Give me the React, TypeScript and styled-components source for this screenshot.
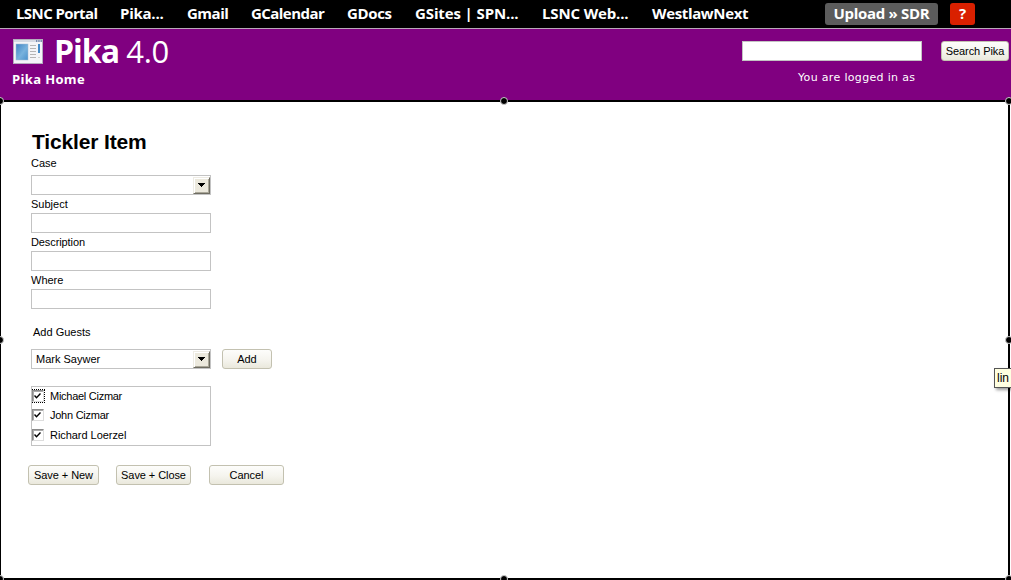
import React from "react";
import styled, { createGlobalStyle } from "styled-components";

const Global = createGlobalStyle`
  * { box-sizing: border-box; }
  body { margin: 0; background: #fff; overflow: hidden; }
`;
const Page = styled.div`
  width: 1011px; height: 580px; overflow: hidden;
  display: flex; flex-direction: column;
  font: 11px/13px "Liberation Sans", Arial, sans-serif; color: #000;
`;
const NavBar = styled.nav`
  height: 29px; flex: none; background: #000; border-bottom: 1px solid #b9a9b9;
  display: flex; align-items: flex-start; padding-left: 16px;
  font: 700 15px/26px "Open Sans", "Noto Sans", sans-serif; color: #fff;
`;
const NavLink = styled.a<{ $w: number; $ls?: number }>`
  width: ${p => p.$w}px; flex: none; white-space: nowrap; letter-spacing: ${p => p.$ls ?? 0}px;
`;
const Pill = styled.a<{ $w: number; $bg: string; $gap: number; $ls?: number }>`
  width: ${p => p.$w}px; height: 22px; margin: 3px 0 0 ${p => p.$gap}px; flex: none;
  background: ${p => p.$bg}; border-radius: 3px; line-height: 20px; text-align: center; white-space: nowrap;
  letter-spacing: ${p => p.$ls ?? 0}px;
`;
const Header = styled.header`
  height: 71px; flex: none; background: #800080; color: #fff;
  display: flex; justify-content: space-between; padding: 0 2px 0 12px;
`;
const Brand = styled.div`display: flex; flex-direction: column;`;
const Logo = styled.div`
  height: 42px; display: flex; align-items: flex-start;
  svg { margin: 10px 11px 0 1px; flex: none; }
`;
const Title = styled.h1`
  margin: 0; white-space: nowrap; font: 700 32px/44px "Open Sans", sans-serif; letter-spacing: -1px;
  span { font-weight: 400; font-size: 31px; letter-spacing: -0.3px; }
`;
const Home = styled.div`font: 700 13px/16px "Open Sans", sans-serif; letter-spacing: 0.35px;`;
const Search = styled.div`display: flex; gap: 19px; padding-top: 12px;`;
const SearchColumn = styled.div`width: 180px;`;
const LoggedIn = styled.div`
  margin: 9px 0 0 56px; font: 11px/16px "DejaVu Sans", Verdana, sans-serif; white-space: nowrap; letter-spacing: 0.33px;
`;
const Field = styled.div<{ $mb?: number }>`
  width: 180px; height: 20px; flex: none; background: #fff; border: 1px solid #c3c3c3;
  margin-bottom: ${p => p.$mb ?? 0}px; display: flex; align-items: center; justify-content: space-between;
  padding-left: 4px;
`;
const Button = styled.button<{ $w: number }>`
  width: ${p => p.$w}px; height: 20px; flex: none; padding: 0; border: 1px solid #c3c1b0; border-radius: 3px;
  background: linear-gradient(#fdfdfb, #f5f4ee 55%, #eae8dc);
  font: inherit; letter-spacing: -0.08px; color: #000; white-space: nowrap;
`;
const Content = styled.main`
  position: relative; width: 1010px; height: 480px; flex: none; background: #fff;
  border: 2px solid #000; border-left-width: 1px;
  display: flex; flex-direction: column; padding: 28px 0 0 30px;
`;
const Heading = styled.h2`margin: 0 0 3px 1px; font-size: 21px; line-height: 24px; letter-spacing: -0.15px;`;
const Label = styled.label<{ $mb: number; $ml?: number; $ls?: number }>`
  height: 13px; margin: 0 0 ${p => p.$mb}px ${p => p.$ml ?? 0}px; letter-spacing: ${p => p.$ls ?? 0}px;
`;
const Arrow = styled.span`
  width: 17px; height: 17px; background: #ece9dd; border: 1px solid;
  border-color: #eeece4 #6f6d62 #6f6d62 #eeece4; box-shadow: inset 1px 1px #fff, inset -1px -1px #aaa799;
  display: flex; align-items: flex-start; justify-content: center; padding-top: 5px;
`;
const Row = styled.div<{ $gap: number; $mb?: number }>`
  display: flex; column-gap: ${p => p.$gap}px; margin-bottom: ${p => p.$mb ?? 0}px;
`;
const GuestList = styled.div`
  width: 180px; height: 60px; border: 1px solid #c3c3c3; margin-bottom: 19px;
`;
const Guest = styled.div<{ $h: number }>`
  height: ${p => p.$h}px; display: flex; align-items: center; gap: 5px;
`;
const GuestName = styled.span<{ $ls: number }>`letter-spacing: ${p => p.$ls}px;`;
const FocusRing = styled.span<{ $on: boolean }>`
  width: 13px; height: 14px; border: 1px dotted ${p => (p.$on ? "#000" : "transparent")};
  display: flex; flex: none;
`;
const Check = styled.span`
  width: 12px; height: 12px; flex: none; margin-left: -1px;
  border: 1px solid; border-color: #8a8a8a #ddd #ddd #8a8a8a; box-shadow: inset 1px 1px #aaa;
  svg { display: block; margin: 1px 0 0 1px; }
`;
const Actions = styled.div`
  display: flex; margin-left: -3px;
  button + button { margin-left: 17px; }
  button + button + button { margin-left: 18px; }
`;
const Handle = styled.i<{ $x: number; $y: number }>`
  position: absolute; left: ${p => p.$x}px; top: ${p => p.$y}px; width: 8px; height: 8px;
  border: 1px solid #ccc; background: #000; border-radius: 50%;
`;
const Tooltip = styled.div`
  position: absolute; left: 993px; top: 266px; width: 25px; height: 20px; border: 1px solid #555;
  background: #ffffe1; font: 12px/18px "Liberation Sans", sans-serif; padding-left: 2px; box-shadow: 2px 2px 3px #0006;
`;

const ArrowButton = () => (
  <Arrow><svg width="7" height="4" viewBox="0 0 7 4" shapeRendering="crispEdges"><path d="M0 0H7V1H6V2H5V3H4V4H3V3H2V2H1V1H0Z" /></svg></Arrow>
);
const WindowIcon = () => (
  <svg width="30" height="25" viewBox="0 0 30 25">
    <defs>
      <linearGradient id="pane" x1="0" y1="0" x2="1" y2="1">
        <stop stopColor="#3f83c4" /><stop offset=".55" stopColor="#78b2dd" /><stop offset="1" stopColor="#4b91cc" />
      </linearGradient>
    </defs>
    <rect x=".5" y=".5" width="29" height="24" fill="#f4f5f8" stroke="#b4adbd" />
    <path d="M1 1H29V3H1Z" fill="#d6dae3" />
    <path d="M23 2h1.3m1 0h1.3m1 0h1.3" stroke="#59709c" strokeWidth="1.3" />
    <rect x="3" y="5" width="12" height="16" fill="url(#pane)" stroke="#a4bdd3" strokeWidth=".5" />
    <path d="M17 6.5h6m-6 3h6m-6 3h6m-6 3h6m-6 3h6" stroke="#b5b5b5" />
    <rect x="25" y="5" width="2" height="9" fill="#438bc9" />
    <path d="M25 18.5h2" stroke="#d0d0d0" />
  </svg>
);

const links: [string, number, number][] = [
  ["LSNC Portal", 104, -0.6], ["Pika...", 67, -0.25], ["Gmail", 64, -0.5], ["GCalendar", 96, -0.55],
  ["GDocs", 68, -0.35], ["GSites | SPN...", 127, -0.12], ["LSNC Web...", 110, -0.15], ["WestlawNext", 97, -0.35],
];
const guests: [string, number, number][] = [
  ["Michael Cizmar", 18, -0.27], ["John Cizmar", 20, -0.25], ["Richard Loerzel", 20, -0.05],
];
const handles: [number, number][] = [
  [-5, -5], [499, -5], [1004, -5], [-5, 234], [1004, 234], [-5, 473], [499, 473], [1004, 473],
];

export default function App() {
  return (
    <Page>
      <Global />
      <NavBar>
        {links.map(([t, w, ls]) => <NavLink key={t} $w={w} $ls={ls}>{t}</NavLink>)}
        <Pill $w={113} $bg="#5c5c5c" $gap={76} $ls={-0.3}>Upload » SDR</Pill>
        <Pill $w={25} $bg="#d92000" $gap={12}>?</Pill>
      </NavBar>
      <Header>
        <Brand>
          <Logo><WindowIcon /><Title>Pika <span>4.0</span></Title></Logo>
          <Home>Pika Home</Home>
        </Brand>
        <Search>
          <SearchColumn><Field /><LoggedIn>You are logged in as</LoggedIn></SearchColumn>
          <Button $w={68}>Search Pika</Button>
        </Search>
      </Header>
      <Content>
        <Heading>Tickler Item</Heading>
        <Label $mb={5}>Case</Label>
        <Field $mb={3}><span /><ArrowButton /></Field>
        <Label $mb={2}>Subject</Label>
        <Field $mb={3} />
        <Label $mb={2} $ls={-0.1}>Description</Label>
        <Field $mb={3} />
        <Label $mb={2}>Where</Label>
        <Field $mb={17} />
        <Label $mb={10} $ml={2}>Add Guests</Label>
        <Row $gap={11} $mb={17}>
          <Field>Mark Saywer<ArrowButton /></Field>
          <Button $w={50}>Add</Button>
        </Row>
        <GuestList>
          {guests.map(([name, h, ls], i) => (
            <Guest key={name} $h={h}>
              <FocusRing $on={i === 0}>
                <Check><svg width="7" height="8" viewBox="0 0 7 8"><path d="M.5 3.5 2.5 5.8 6.5 1.5" fill="none" stroke="#000" strokeWidth="1.4" /></svg></Check>
              </FocusRing>
              <GuestName $ls={ls}>{name}</GuestName>
            </Guest>
          ))}
        </GuestList>
        <Actions>
          <Button $w={71}>Save + New</Button>
          <Button $w={75}>Save + Close</Button>
          <Button $w={75}>Cancel</Button>
        </Actions>
        {handles.map(([x, y]) => <Handle key={`${x},${y}`} $x={x} $y={y} />)}
        <Tooltip>lin</Tooltip>
      </Content>
    </Page>
  );
}
